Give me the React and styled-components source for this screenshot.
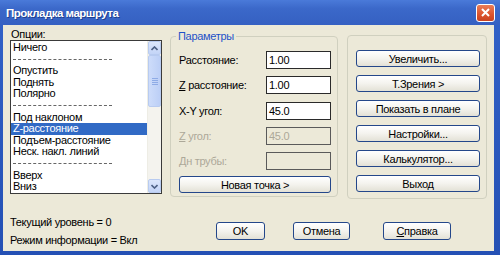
import styled, { createGlobalStyle } from 'styled-components'

const Global = createGlobalStyle`
  body {
    margin: 0;
    background: #ffffff;
  }
  * {
    box-sizing: border-box;
  }
`

const Window = styled.div`
  width: 500px;
  height: 255px;
  display: flex;
  flex-direction: column;
  background: linear-gradient(180deg, #3262c8 0%, #2450b4 100%);
  font-family: "Liberation Sans", Arial, sans-serif;
  font-size: 11px;
  letter-spacing: -0.3px;
  color: #000;
  overflow: hidden;
`

const TitleBar = styled.div`
  height: 25px;
  flex: none;
  display: flex;
  align-items: center;
  justify-content: space-between;
  padding: 0 5px 0 6px;
  background: linear-gradient(180deg, #4a7ad9 0%, #3b68c9 35%, #3560c2 100%);
`

const Title = styled.span`
  color: #fff;
  font-weight: bold;
  font-size: 11.5px;
  letter-spacing: -0.5px;
  text-shadow: 1px 1px 0 #1f3f8e;
`

const CloseBox = styled.div`
  width: 19px;
  height: 18px;
  border: 1px solid #fff;
  border-radius: 3px;
  background: linear-gradient(180deg, #ea7d57 0%, #db532d 60%, #c9421f 100%);
  display: flex;
  align-items: center;
  justify-content: center;
`

const Frame = styled.div`
  flex: 1;
  margin: 0 6px 4px 3px;
  background: #ece9d8;
  padding: 4px 0 0 7px;
  display: flex;
  flex-direction: column;
`

const TopRow = styled.div`
  display: flex;
  align-items: flex-start;
`

const LeftCol = styled.div`
  width: 152px;
  display: flex;
  flex-direction: column;
`

const Caption = styled.div`
  height: 11px;
  line-height: 11px;
  padding-left: 1px;
`

const ListBox = styled.div`
  height: 154px;
  border: 1px solid #3a3a3a;
  background: #fff;
  display: flex;
`

const Items = styled.div`
  flex: 1;
  padding-top: 1px;
`

const Item = styled.div`
  height: 11.6px;
  line-height: 11.6px;
  padding-left: 2px;
  white-space: nowrap;
  background: ${p => (p.$selected ? '#316ac5' : 'transparent')};
  color: ${p => (p.$selected ? '#fff' : '#000')};
`

const Dashes = styled.div`
  height: 11.6px;
  margin: 0 35px 0 2px;
  display: flex;
  align-items: center;
  &::before {
    content: '';
    flex: 1;
    border-top: 1px dashed #666;
  }
`

const ScrollBar = styled.div`
  width: 14px;
  display: flex;
  flex-direction: column;
  background: #f4f3ee;
  border-left: 1px solid #eeede5;
`

const ScrollBtn = styled.div`
  height: 14px;
  flex: none;
  border: 1px solid #b8cbf0;
  border-radius: 2px;
  background: linear-gradient(180deg, #dce7fc 0%, #c3d4f7 100%);
  display: flex;
  align-items: center;
  justify-content: center;
`

const Thumb = styled.div`
  height: 52px;
  flex: none;
  border: 1px solid #b8cbf0;
  border-radius: 2px;
  background: linear-gradient(90deg, #cddcfa 0%, #bccff6 100%);
  display: flex;
  flex-direction: column;
  align-items: center;
  justify-content: center;
  gap: 1px;
  span {
    width: 6px;
    height: 1px;
    background: #8eabe6;
  }
`

const Track = styled.div`
  flex: 1;
`

const Group = styled.div`
  position: relative;
  width: ${p => p.$w}px;
  height: ${p => p.$h}px;
  margin-left: ${p => p.$ml}px;
  margin-top: ${p => p.$mt}px;
  border: 1px solid #d0d0bf;
  border-radius: 4px;
  display: flex;
  flex-direction: column;
  padding: ${p => p.$pad};
  gap: ${p => p.$gap}px;
`

const Legend = styled.span`
  position: absolute;
  top: -7px;
  left: 5px;
  padding: 0 2px;
  background: #ece9d8;
  color: #1f52c8;
  line-height: 12px;
`

const Field = styled.div`
  height: 18px;
  display: flex;
  align-items: center;
  justify-content: space-between;
  color: ${p => (p.$disabled ? '#aca899' : '#000')};
`

const Input = styled.div`
  width: 65px;
  height: 18px;
  border: 1px solid ${p => (p.$disabled ? '#5a5a5a' : '#2a2a2a')};
  background: ${p => (p.$disabled ? '#ece9d8' : '#fff')};
  color: ${p => (p.$disabled ? '#aca899' : '#000')};
  padding-left: 2px;
  line-height: 16px;
`

const Button = styled.div`
  width: ${p => p.$w || 124}px;
  height: ${p => p.$h || 17}px;
  flex: none;
  border: 1px solid #24478a;
  border-radius: 3px;
  background: linear-gradient(180deg, #ffffff 0%, #f4f3ee 50%, #e3e1d6 100%);
  display: flex;
  align-items: center;
  justify-content: center;
  margin-left: ${p => p.$ml || 0}px;
  margin-top: ${p => p.$mt || 0}px;
  white-space: nowrap;
`

const BottomRow = styled.div`
  display: flex;
  align-items: flex-start;
  margin-top: 14px;
`

const Status = styled.div`
  width: 206px;
  display: flex;
  flex-direction: column;
  div {
    height: 18.3px;
    line-height: 18.3px;
  }
`

const Arrow = ({ down }) => (
  <svg width="7" height="5" viewBox="0 0 7 5">
    <path
      d={down ? 'M0.5 1 L3.5 4 L6.5 1' : 'M0.5 4 L3.5 1 L6.5 4'}
      fill="none"
      stroke="#4d6185"
      strokeWidth="1.6"
    />
  </svg>
)

const listItems = [
  'Ничего',
  '-',
  'Опустить',
  'Поднять',
  'Полярно',
  '-',
  'Под наклоном',
  'Z-расстояние',
  'Подъем-расстояние',
  'Неск. накл. линий',
  '-',
  'Вверх',
  'Вниз',
]

const fields = [
  { label: <>Расстояние:</>, value: '1.00' },
  { label: <><u>Z</u> расстояние:</>, value: '1.00' },
  { label: <>X-Y угол:</>, value: '45.0' },
  { label: <><u>Z</u> угол:</>, value: '45.0', disabled: true },
  { label: <>Дн трубы:</>, value: '', disabled: true },
]

const rightButtons = [
  'Увеличить...',
  'Т.Зрения >',
  'Показать в плане',
  'Настройки...',
  'Калькулятор...',
  'Выход',
]

export default function App() {
  return (
    <Window>
      <Global />
      <TitleBar>
        <Title>Прокладка маршрута</Title>
        <CloseBox>
          <svg width="11" height="11" viewBox="0 0 11 11">
            <path d="M2 2 L9 9 M9 2 L2 9" stroke="#fff" strokeWidth="2" />
          </svg>
        </CloseBox>
      </TitleBar>
      <Frame>
        <TopRow>
          <LeftCol>
            <Caption>Опции:</Caption>
            <ListBox>
              <Items>
                {listItems.map((it, i) =>
                  it === '-' ? (
                    <Dashes key={i} />
                  ) : (
                    <Item key={i} $selected={it === 'Z-расстояние'}>
                      {it}
                    </Item>
                  )
                )}
              </Items>
              <ScrollBar>
                <ScrollBtn><Arrow /></ScrollBtn>
                <Thumb><span /><span /><span /><span /></Thumb>
                <Track />
                <ScrollBtn><Arrow down /></ScrollBtn>
              </ScrollBar>
            </ListBox>
          </LeftCol>

          <Group $w={168} $h={161} $ml={8} $mt={7} $pad="14px 6px 0 8px" $gap={7.3}>
            <Legend>Параметры</Legend>
            {fields.map((f, i) => (
              <Field key={i} $disabled={f.disabled}>
                <span>{f.label}</span>
                <Input $disabled={f.disabled}>{f.value}</Input>
              </Field>
            ))}
            <Button $w={152} $mt={-1}>Новая точка &gt;</Button>
          </Group>

          <Group $w={140} $h={164} $ml={9} $mt={6} $pad="14px 0 0 8px" $gap={8.1}>
            {rightButtons.map(b => (
              <Button key={b}>{b}</Button>
            ))}
          </Group>
        </TopRow>

        <BottomRow>
          <Status>
            <div>Текущий уровень = 0</div>
            <div>Режим информации = Вкл</div>
          </Status>
          <Button $w={49} $h={18} $mt={9}>OK</Button>
          <Button $w={57} $h={18} $mt={9} $ml={28}>Отмена</Button>
          <Button $w={68} $h={18} $mt={9} $ml={33}><span><u>С</u>правка</span></Button>
        </BottomRow>
      </Frame>
    </Window>
  )
}
